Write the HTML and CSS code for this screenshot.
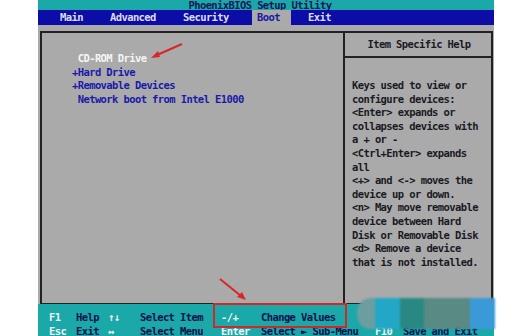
FILE: index.html
```html
<!DOCTYPE html>
<html>
<head>
    <title>PhoenixBIOS Setup Utility</title>
    <link rel="stylesheet" href="styles.css">
</head>
<body>
    <div class="screen">
        <div class="title">PhoenixBIOS Setup Utility</div>
        <div class="menubar">
            <span class="tab tab-main">Main</span>
            <span class="tab tab-adv">Advanced</span>
            <span class="tab tab-sec">Security</span>
            <span class="tab tab-boot active">Boot</span>
            <span class="tab">Exit</span>
        </div>
        <div class="body">
            <div class="frame">
                <div class="items">
                    <div class="item selected"> CD-ROM Drive</div>
                    <div class="item">+Hard Drive</div>
                    <div class="item">+Removable Devices</div>
                    <div class="item"> Network boot from Intel E1000</div>
                </div>
                <div class="help">
                    <div class="help-title">Item Specific Help</div>
                    <div class="help-text">
                        <div>Keys used to view or</div>
                        <div>configure devices:</div>
                        <div>&lt;Enter&gt; expands or</div>
                        <div>collapses devices with</div>
                        <div>a + or -</div>
                        <div>&lt;Ctrl+Enter&gt; expands</div>
                        <div>all</div>
                        <div>&lt;+&gt; and &lt;-&gt; moves the</div>
                        <div>device up or down.</div>
                        <div>&lt;n&gt; May move removable</div>
                        <div>device between Hard</div>
                        <div>Disk or Removable Disk</div>
                        <div>&lt;d&gt; Remove a device</div>
                        <div>that is not installed.</div>
                    </div>
                </div>
            </div>
        </div>
        <div class="footer">
            <span class="key">F1</span><span class="desc">Help</span>
            <span class="key">↑↓</span><span class="desc">Select Item</span>
            <span class="key">-/+</span><span class="desc">Change Values</span>
            <span class="key">F9</span><span class="desc">Setup Defaults</span>
            <span class="key">Esc</span><span class="desc">Exit</span>
            <span class="key">↔</span><span class="desc">Select Menu</span>
            <span class="key">Enter</span><span class="desc">Select ► Sub-Menu</span>
            <span class="key">F10</span><span class="desc">Save and Exit</span>
        </div>
    </div>

    <!-- annotations drawn on top of the screenshot -->
    <svg class="marks" width="529" height="336" viewBox="0 0 529 336">
        <line x1="182" y1="44" x2="157" y2="55" stroke="#d8262a" stroke-width="2"/>
        <polygon points="151,58 158,51 160,57" fill="#d8262a"/>
        <line x1="220" y1="279" x2="241" y2="296" stroke="#d8262a" stroke-width="2"/>
        <polygon points="246,300 237,297 242,292" fill="#d8262a"/>
        <rect x="214" y="304" width="132" height="23" fill="none" stroke="#d02828" stroke-width="2"/>
    </svg>

    <div class="smudge">
        <span class="blk b1"></span>
        <span class="blk b2"></span>
        <span class="blk b3"></span>
        <span class="blk b4"></span>
        <span class="blk b5"></span>
    </div>
</body>
</html>
```

FILE: styles.css
```css
body {
    margin: 0;
    background-color: white;
    width: 529px;
    height: 336px;
    position: relative;
    overflow: hidden;
}
.screen {
    width: 456px;
    height: 336px;
    margin-left: 38px;
    display: flex;
    flex-direction: column;
    background-color: #aaaaaa;
    font-family: "DejaVu Sans Mono", monospace;
    font-weight: bold;
    font-size: 10.5px;
    letter-spacing: -0.6px;
}
.title {
    height: 10px;
    line-height: 10px;
    background-color: #1aa8a8;
    color: #16165a;
    text-align: center;
    padding-right: 12px;
    overflow: hidden;
}
.menubar {
    height: 15px;
    line-height: 15px;
    background-color: #0c0ca6;
    color: #dcdce8;
    display: flex;
    padding-left: 17px;
}
.tab {
    padding: 0 5px;
    box-sizing: border-box;
}
.tab-main {
    width: 50px;
}
.tab-adv {
    width: 73px;
}
.tab-sec {
    width: 74px;
}
.tab-boot {
    width: 39px;
    margin-right: 12px;
}
.tab.active {
    background-color: #aaaaaa;
    color: #1a1aa0;
}
.body {
    flex: 1;
    padding: 6px 1px 0 2px;
    min-height: 0;
}
.frame {
    height: 100%;
    box-sizing: border-box;
    border: 2px solid #222;
    border-bottom-width: 1px;
    display: flex;
}
.items {
    width: 301px;
    padding: 19px 0 0 30px;
    box-sizing: border-box;
}
.item {
    line-height: 13.6px;
    height: 13.6px;
    white-space: pre;
    color: #1a1aa8;
}
.item.selected {
    color: #f5f5f5;
}
.help {
    flex: 1;
    border-left: 2px solid #222;
}
.help-title {
    height: 23px;
    line-height: 23px;
    text-align: center;
    border-bottom: 2px solid #222;
    color: #1a1a24;
    padding-left: 2px;
}
.help-text {
    padding: 21px 0 0 7px;
    line-height: 13.6px;
    color: #1a1a24;
}
.footer {
    height: 32px;
    box-sizing: border-box;
    background-color: #1aa8a8;
    padding: 6px 0 0 11px;
    display: grid;
    grid-template-columns: 27px 32px 32px 81px 40px 114px 28px auto;
    grid-auto-rows: 14px;
    line-height: 14px;
    white-space: nowrap;
}
.key {
    color: #f2f2f2;
}
.desc {
    color: #10104e;
}
.marks {
    position: absolute;
    left: 0;
    top: 0;
}
.smudge {
    position: absolute;
    left: 357px;
    top: 298px;
    width: 138px;
    height: 31px;
    display: flex;
    border-radius: 14px 0 0 14px;
    overflow: hidden;
    filter: blur(1.2px);
}
.blk {
    height: 100%;
}
.b1 {
    width: 18px;
    background-color: #6c9ea0;
}
.b2 {
    width: 25px;
    background-color: #22a8c6;
}
.b3 {
    width: 24px;
    background-color: #2a8882;
}
.b4 {
    width: 46px;
    background-color: #5a8a84;
}
.b5 {
    width: 25px;
    background-color: #3a9ad8;
}
```
